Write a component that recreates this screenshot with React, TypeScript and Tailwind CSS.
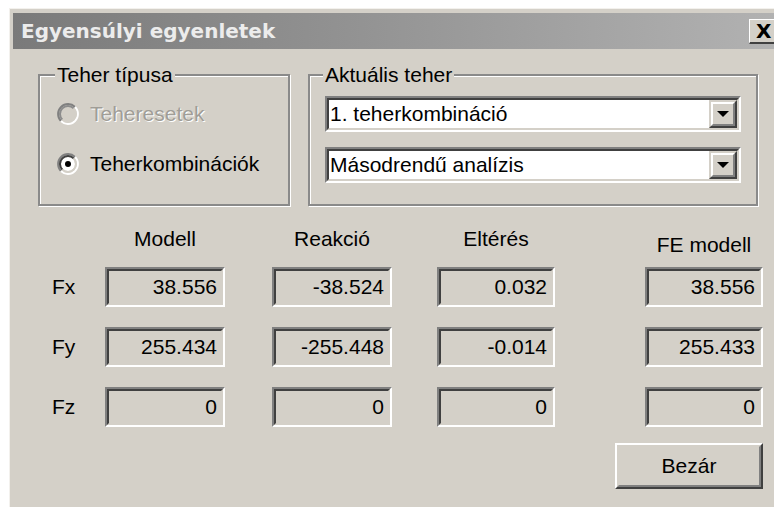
import React from 'react';

type RadioProps = { checked?: boolean; disabled?: boolean };

// Classic sunken radio bullet
function RadioBullet({ checked, disabled }: RadioProps) {
  return (
    <svg width="22" height="22" viewBox="0 0 22 22" className="shrink-0">
      <circle cx="11" cy="11" r="7" fill={disabled ? '#d4d0c8' : '#ffffff'} />
      <path d="M3.93 18.07 A10 10 0 0 1 18.07 3.93" fill="none" stroke="#808080" strokeWidth="2" />
      <path d="M18.07 3.93 A10 10 0 0 1 3.93 18.07" fill="none" stroke="#ffffff" strokeWidth="2" />
      <path d="M5.34 16.66 A8 8 0 0 1 16.66 5.34" fill="none" stroke={disabled ? '#8c8c8c' : '#404040'} strokeWidth="2" />
      <path d="M16.66 5.34 A8 8 0 0 1 5.34 16.66" fill="none" stroke="#d4d0c8" strokeWidth="2" />
      {checked && <circle cx="11" cy="11" r="3" fill="#000000" />}
    </svg>
  );
}

function Radio({ label, checked, disabled }: RadioProps & { label: string }) {
  return (
    <div className="h-[30px] flex items-center gap-[11px]">
      <RadioBullet checked={checked} disabled={disabled} />
      <span className={disabled ? 'text-[#a09d97] [text-shadow:1px_1px_0_#ffffff]' : 'text-black'}>{label}</span>
    </div>
  );
}

function Combo({ value }: { value: string }) {
  return (
    <div className="h-[36px] border-2 border-t-[#808080] border-l-[#808080] border-b-white border-r-white">
      <div className="h-full border-2 border-t-[#404040] border-l-[#404040] border-b-[#d4d0c8] border-r-[#d4d0c8] bg-white flex items-center">
        <span className="flex-1 pl-[1px]">{value}</span>
        <div className="w-[28px] h-full border-2 border-t-[#d4d0c8] border-l-[#d4d0c8] border-b-[#404040] border-r-[#404040]">
          <div className="h-full bg-[#d4d0c8] border-2 border-t-white border-l-white border-b-[#808080] border-r-[#808080] flex items-center justify-center">
            <svg width="12" height="6" viewBox="0 0 12 6">
              <path d="M0 0 H12 L6 6 Z" fill="#000000" />
            </svg>
          </div>
        </div>
      </div>
    </div>
  );
}

function Field({ value, w }: { value: string; w: string }) {
  return (
    <div className={`${w} h-[40px] border-2 border-t-[#808080] border-l-[#808080] border-b-white border-r-white`}>
      <div className="h-full border-2 border-t-[#404040] border-l-[#404040] border-b-[#d4d0c8] border-r-[#d4d0c8] flex items-center justify-end pr-[4px]">
        {value}
      </div>
    </div>
  );
}

const rows = [
  { name: 'Fx', values: ['38.556', '-38.524', '0.032', '38.556'] },
  { name: 'Fy', values: ['255.434', '-255.448', '-0.014', '255.433'] },
  { name: 'Fz', values: ['0', '0', '0', '0'] },
];

const widths = ['w-[120px]', 'w-[120px]', 'w-[118px]', 'w-[118px]'];

export default function App() {
  return (
    <div className="w-[774px] h-[509px] overflow-hidden bg-white pl-[9px] pt-[8px] font-['Liberation_Sans',Arial,sans-serif] text-[21px] leading-[24px] text-black">
      <div className="w-[774px] h-[499px] bg-[#d4d0c8] border-l border-t border-[#f3f1ed] px-[3px] pt-[4px] flex flex-col">
        {/* title bar */}
        <div className="h-[36px] shrink-0 bg-gradient-to-r from-[#7a7a7a] to-[#b2b2b2] flex items-center justify-between pl-[8px]">
          <span className="font-['DejaVu_Sans',sans-serif] font-bold text-[20px] text-[#ececec]">Egyensúlyi egyenletek</span>
          <div className="w-[31px] h-[25px] bg-[#d4d0c8] border-t border-l border-white border-b-2 border-r-2 border-b-[#404040] border-r-[#404040] flex items-center justify-start pl-[6px]">
            <span className="font-['DejaVu_Sans',sans-serif] font-bold text-[20px] leading-none">X</span>
          </div>
        </div>

        {/* group boxes */}
        <div className="pl-[25px] pt-[14px] flex gap-[18px]">
          <fieldset className="w-[252px] h-[143px] border-2 border-[#8a8a8a] shadow-[inset_1px_1px_0_#ffffff,1px_1px_0_#ffffff] pl-[17px] pt-[12px] flex flex-col gap-[20px]">
            <legend className="-ml-[2px] px-[2px] bg-[#d4d0c8]">Teher típusa</legend>
            <Radio label="Teheresetek" disabled />
            <Radio label="Teherkombinációk" checked />
          </fieldset>
          <fieldset className="w-[450px] h-[143px] border-2 border-[#8a8a8a] shadow-[inset_1px_1px_0_#ffffff,1px_1px_0_#ffffff] px-[15px] pt-[9px] flex flex-col gap-[15px]">
            <legend className="-ml-[2px] px-[2px] bg-[#d4d0c8]">Aktuális teher</legend>
            <Combo value="1. teherkombináció" />
            <Combo value="Másodrendű analízis" />
          </fieldset>
        </div>

        {/* column headings */}
        <div className="mt-[21px] grid grid-cols-[92px_167px_165px_208px_118px]">
          <div />
          <div className="w-[120px] text-center">Modell</div>
          <div className="w-[120px] text-center">Reakció</div>
          <div className="w-[118px] text-center">Eltérés</div>
          <div className="w-[118px] text-center mt-[6px]">FE modell</div>
        </div>

        {/* result rows */}
        <div className="mt-[10px] flex flex-col gap-[20px]">
          {rows.map(r => (
            <div key={r.name} className="grid grid-cols-[92px_167px_165px_208px_118px] items-center">
              <div className="pl-[39px]">{r.name}</div>
              {r.values.map((v, i) => (
                <Field key={i} value={v} w={widths[i]} />
              ))}
            </div>
          ))}
        </div>

        <div className="w-[750px] mt-[16px] flex justify-end">
          <div className="w-[148px] h-[46px] border-2 border-t-white border-l-white border-b-[#404040] border-r-[#404040]">
            <div className="h-full border-2 border-t-[#d4d0c8] border-l-[#d4d0c8] border-b-[#808080] border-r-[#808080] flex items-center justify-center">
              Bezár
            </div>
          </div>
        </div>
      </div>
    </div>
  );
}
